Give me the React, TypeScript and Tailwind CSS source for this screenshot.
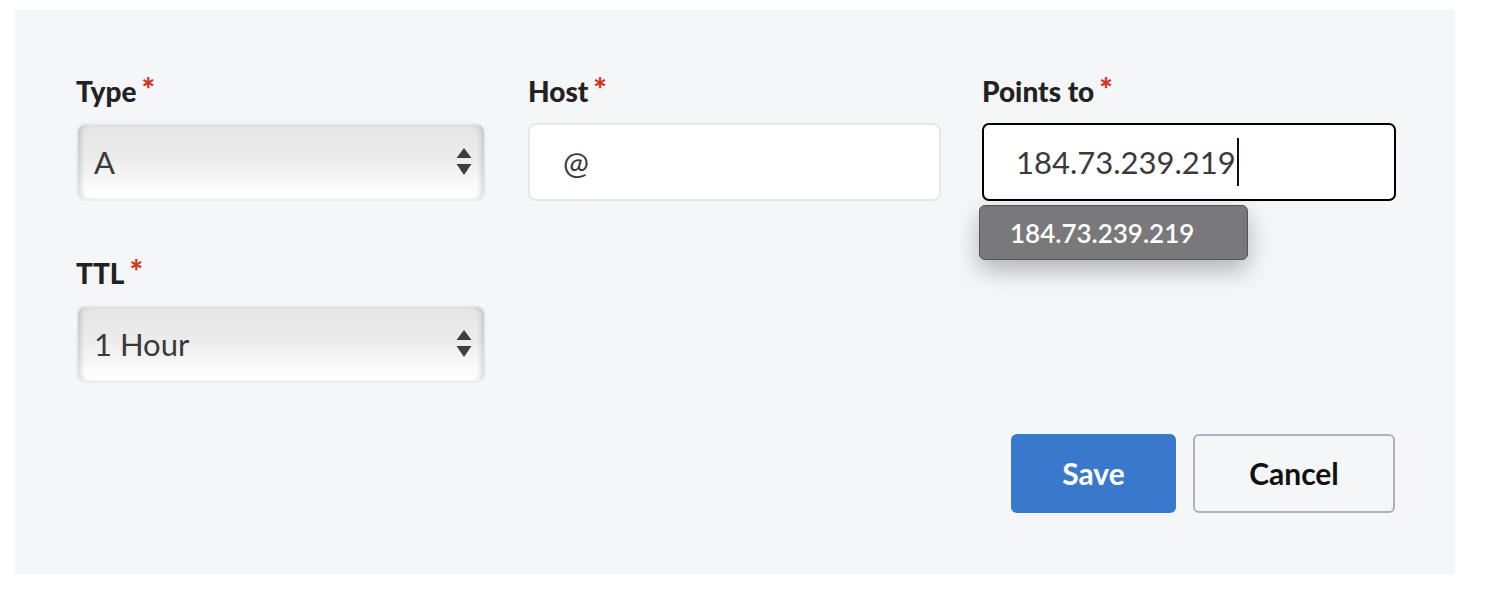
import { ReactNode } from 'react'

const FONT = "font-['Lato','Liberation_Sans',sans-serif]"

const FieldLabel = ({ children }: { children: ReactNode }) => (
  <div className="mb-4 flex items-start text-[28px] font-black leading-[32px] text-[#222]">
    {children}
    <span className="ml-[5px] mt-[-1px] text-[32px] font-black leading-[30px] text-[#d5321f]">*</span>
  </div>
)

const SelectArrows = () => (
  <svg width="16" height="28" viewBox="0 0 16 28" className="shrink-0">
    <path d="M8 0 L15.5 10 L0.5 10 Z" fill="#3d3d3d" />
    <path d="M0.5 16 L15.5 16 L8 27 Z" fill="#3d3d3d" />
  </svg>
)

const FakeSelect = ({ value }: { value: string }) => (
  <div className="flex h-[78px] items-center justify-between rounded-[9px] border-2 border-[#ececec] bg-[linear-gradient(180deg,#e4e4e4_0%,#ececec_45%,#fdfdfd_90%,#ffffff_100%)] pl-[16px] pr-[12px] shadow-[inset_6px_0_6px_-4px_rgba(0,0,0,0.18),inset_-6px_0_6px_-4px_rgba(0,0,0,0.18)]">
    <span className="text-[31px] leading-none text-[#3a3a3a]">{value}</span>
    <SelectArrows />
  </div>
)

export default function App() {
  return (
    <div className={`${FONT} min-h-screen bg-white pl-[15px] pt-[10px]`}>
      <div className="flex h-[564px] w-[1440px] flex-col bg-[#f5f6f8] pb-[61px] pl-[61px] pr-[60px] pt-[65px]">
        <div className="grid grid-cols-[410px_413px_413px] gap-x-[42px]">
          <div>
            <FieldLabel>Type</FieldLabel>
            <FakeSelect value="A" />
          </div>

          <div>
            <FieldLabel>Host</FieldLabel>
            <div className="flex h-[78px] items-center rounded-[8px] border-2 border-[#e6e8e6] bg-white pl-[33px]">
              <span className="text-[31px] leading-none text-[#3a3a3a]">@</span>
            </div>
          </div>

          <div className="relative ml-[-1px]">
            <FieldLabel>Points to</FieldLabel>
            <div className="flex h-[78px] items-center rounded-[7px] border-2 border-black bg-white pl-[32px]">
              <span className="text-[31px] leading-none text-[#3a3a3a]">184.73.239.219</span>
              <span className="ml-[1px] h-[48px] w-[2px] bg-[#111]" />
            </div>
            <div className="absolute left-[-3px] top-[130px] flex h-[55px] w-[269px] items-center rounded-[6px] border border-[#555] bg-[#79797b] pl-[30px] shadow-[0_10px_24px_rgba(0,0,0,0.28)]">
              <span className="text-[26px] font-semibold leading-none text-white">184.73.239.219</span>
            </div>
          </div>

          <div className="mt-[56px]">
            <FieldLabel>TTL</FieldLabel>
            <FakeSelect value="1 Hour" />
          </div>
        </div>

        <div className="mt-[51px] flex justify-end gap-[17px]">
          <button
            type="button"
            className="h-[79px] w-[165px] rounded-[6px] bg-[#3a78cc] text-[30px] font-bold text-white"
          >
            Save
          </button>
          <button
            type="button"
            className="h-[79px] w-[202px] rounded-[6px] border-2 border-[#aab3bf] bg-[#f5f6f8] text-[30px] font-bold text-[#111]"
          >
            Cancel
          </button>
        </div>
      </div>
    </div>
  )
}
